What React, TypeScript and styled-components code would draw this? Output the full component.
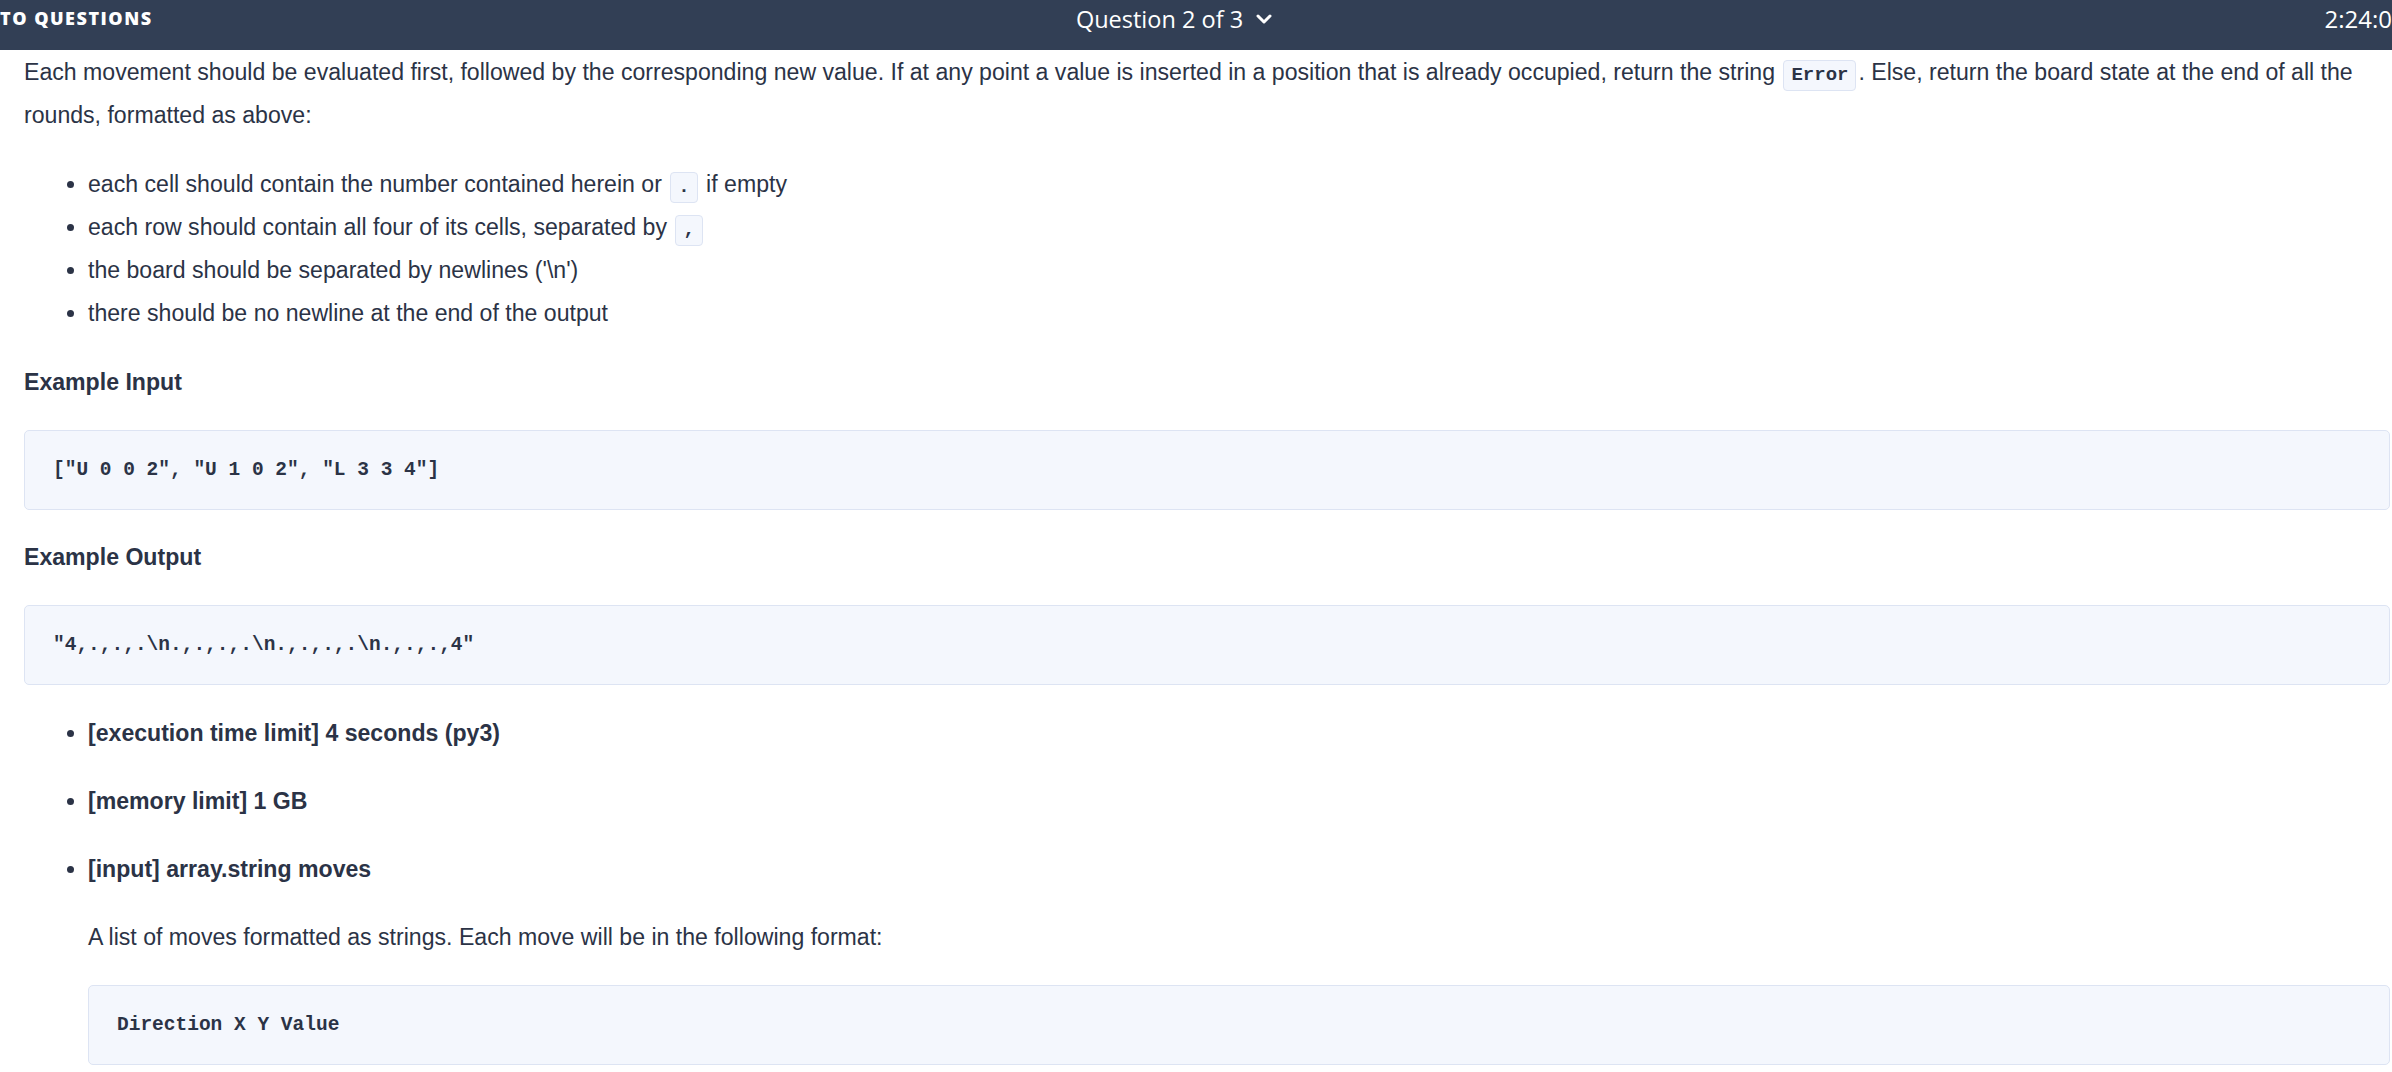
import React from "react";
import styled, { createGlobalStyle } from "styled-components";
import { ChevronDown } from "lucide-react";

const GlobalStyle = createGlobalStyle`
  html, body {
    margin: 0;
    padding: 0;
    background: #ffffff;
    overflow: hidden;
  }
  body {
    font-family: "Liberation Sans", Arial, sans-serif;
    color: #2b3346;
  }
`;

const Page = styled.div`
  width: 100vw;
  height: 100vh;
  overflow: hidden;
  display: flex;
  flex-direction: column;
`;

const TopBar = styled.header`
  flex: 0 0 50px;
  height: 50px;
  background: #323f55;
  color: #ffffff;
  display: grid;
  grid-template-columns: 1fr auto 1fr;
  align-items: start;
  padding-top: 5px;
  box-sizing: border-box;
  overflow: hidden;
  font-family: "Open Sans", "Lato", sans-serif;
`;

const BackLink = styled.div`
  justify-self: start;
  margin-top: 1px;
  font-size: 18px;
  font-weight: 800;
  letter-spacing: 1.5px;
  line-height: 24px;
  white-space: nowrap;
`;

const QuestionPicker = styled.div`
  display: flex;
  align-items: center;
  gap: 9px;
  margin-right: 40px;
  font-size: 23.5px;
  font-weight: 500;
  line-height: 28px;
  white-space: nowrap;
`;

const Timer = styled.div`
  justify-self: end;
  font-size: 24px;
  font-weight: 500;
  line-height: 28px;
  white-space: nowrap;
`;

const Content = styled.main`
  flex: 1;
  padding: 1px 2px 0 24px;
  font-size: 23.1px;
  line-height: 43px;
`;

const Paragraph = styled.p`
  margin: 0;
`;

const IndentedParagraph = styled.p`
  margin: 25px 0 0;
  font-weight: normal;
`;

const BulletList = styled.ul`
  margin: 26px 0 0;
  padding-left: 64px;
`;

const SpecList = styled.ul`
  margin: 27px 0 0;
  padding-left: 64px;
`;

const SpecItem = styled.li`
  margin-top: 25px;
  &:first-child {
    margin-top: 0;
  }
`;

const SpecLabel = styled.strong`
  font-weight: bold;
`;

const Heading = styled.h3`
  margin: 26px 0 0;
  font-size: 23.1px;
  font-weight: bold;
  line-height: 43px;
`;

const CodeBlock = styled.pre`
  margin: 26px 0 0;
  background: #f4f7fd;
  border: 1px solid #dde4f3;
  border-radius: 5px;
  padding: 27px 28px;
  font-family: "Liberation Mono", "Courier New", monospace;
  font-weight: bold;
  font-size: 19.5px;
  line-height: 24px;
  color: #2b3346;
  white-space: pre;
  overflow: hidden;
`;

const InlineCode = styled.code`
  display: inline-block;
  margin: 0 2px;
  padding: 3px 7px;
  line-height: 23px;
  background: #f4f7fd;
  border: 1px solid #dde4f3;
  border-radius: 4px;
  font-family: "Liberation Mono", "Courier New", monospace;
  font-weight: bold;
  font-size: 19px;
  color: #2b3346;
`;

export default function App() {
  return (
    <Page>
      <GlobalStyle />
      <TopBar>
        <BackLink>TO QUESTIONS</BackLink>
        <QuestionPicker>
          Question 2 of 3
          <ChevronDown size={24} strokeWidth={3} />
        </QuestionPicker>
        <Timer>2:24:0</Timer>
      </TopBar>
      <Content>
        <Paragraph>
          Each movement should be evaluated first, followed by the corresponding new value. If at any
          point a value is inserted in a position that is already occupied, return the string{" "}
          <InlineCode>Error</InlineCode>. Else, return the board state at the end of all the rounds,
          formatted as above:
        </Paragraph>
        <BulletList>
          <li>
            each cell should contain the number contained herein or <InlineCode>.</InlineCode> if empty
          </li>
          <li>
            each row should contain all four of its cells, separated by <InlineCode>,</InlineCode>
          </li>
          <li>the board should be separated by newlines ('\n')</li>
          <li>there should be no newline at the end of the output</li>
        </BulletList>
        <Heading>Example Input</Heading>
        <CodeBlock>{`["U 0 0 2", "U 1 0 2", "L 3 3 4"]`}</CodeBlock>
        <Heading>Example Output</Heading>
        <CodeBlock>{`"4,.,.,.\\n.,.,.,.\\n.,.,.,.\\n.,.,.,4"`}</CodeBlock>
        <SpecList>
          <SpecItem>
            <SpecLabel>[execution time limit] 4 seconds (py3)</SpecLabel>
          </SpecItem>
          <SpecItem>
            <SpecLabel>[memory limit] 1 GB</SpecLabel>
          </SpecItem>
          <SpecItem>
            <SpecLabel>[input] array.string moves</SpecLabel>
            <IndentedParagraph>
              A list of moves formatted as strings. Each move will be in the following format:
            </IndentedParagraph>
            <CodeBlock>{`Direction X Y Value`}</CodeBlock>
          </SpecItem>
        </SpecList>
      </Content>
    </Page>
  );
}
